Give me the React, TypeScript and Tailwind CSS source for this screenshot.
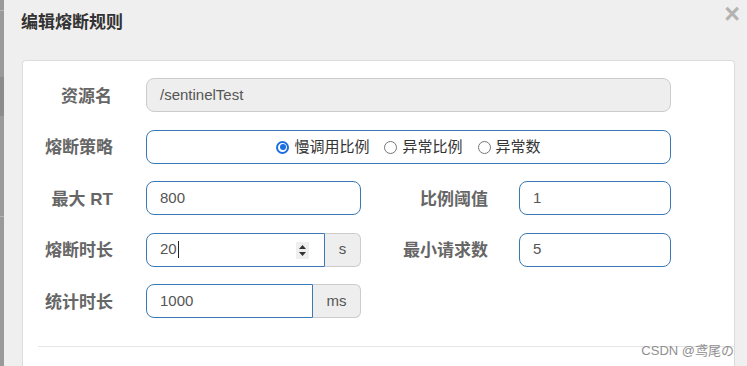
import type { ReactNode } from 'react'

const font = { fontFamily: '"Liberation Sans", "Noto Sans CJK SC", sans-serif' }

function Label({ children, w, pr }: { children: ReactNode; w: string; pr: string }) {
  return (
    <div className={`${w} ${pr} shrink-0 pt-[3px] text-right text-[17px] font-bold text-[#666]`}>
      {children}
    </div>
  )
}

function Radio({ checked, label }: { checked?: boolean; label: string }) {
  return (
    <div className="flex items-center gap-[5px]">
      {checked ? (
        <span className="flex h-[13px] w-[13px] items-center justify-center rounded-full border-2 border-[#1a6fe0] bg-white">
          <span className="h-[6px] w-[6px] rounded-full bg-[#1a6fe0]" />
        </span>
      ) : (
        <span className="h-[13px] w-[13px] rounded-full border border-[#767676] bg-white" />
      )}
      <span className="text-[15px] text-[#333]">{label}</span>
    </div>
  )
}

function Spinner() {
  return (
    <span className="absolute right-[15px] top-[8px] flex h-[17px] w-[13px] items-center justify-center bg-[#efefef]">
      <svg width="9" height="13" viewBox="0 0 9 13">
        <path d="M4.5 1 L8 5 L1 5 Z" fill="#333" />
        <path d="M4.5 12 L8 8 L1 8 Z" fill="#333" />
      </svg>
    </span>
  )
}

export default function App() {
  return (
    <div className="relative flex h-[366px] w-[747px] overflow-hidden bg-[#efefef]" style={font}>
      {/* page strip behind the modal */}
      <div className="flex w-[4px] shrink-0 flex-col bg-[#9a9a9a]">
        <div className="mt-[10px] h-px bg-[#b5b5b5]" />
        <div className="mt-[66px] h-[39px] bg-[#8c8c8c]" />
        <div className="mt-[100px] h-px bg-[#b5b5b5]" />
      </div>

      <div className="flex flex-1 flex-col">
        {/* header */}
        <div className="flex h-[60px] shrink-0 items-start pl-[17px] pt-[11px]">
          <h4 className="text-[17px] font-bold leading-[24px] text-[#333]">编辑熔断规则</h4>
        </div>
        <span className="absolute right-[7px] top-[1px] text-[27px] font-bold leading-[27px] text-[#b3b3b3]">×</span>

        {/* body card */}
        <div className="ml-[18px] flex w-[713px] flex-1 flex-col rounded-t-[4px] border border-b-0 border-[#dcdcdc] bg-white pt-[17px]">
          <div className="flex flex-col gap-[17.5px]">
            <div className="flex h-[34px] items-center">
              <Label w="w-[123px]" pr="pr-[34px]">资源名</Label>
              <div className="flex h-[34px] w-[525px] items-center rounded-[8px] border border-[#ccc] bg-[#eee] px-[13px] text-[15px] text-[#555]">
                /sentinelTest
              </div>
            </div>

            <div className="flex h-[34px] items-center">
              <Label w="w-[123px]" pr="pr-[33px]">熔断策略</Label>
              <div className="flex h-[34px] w-[525px] items-center justify-center gap-[15px] rounded-[8px] border border-[#3a78b8] bg-white pt-[1px]">
                <Radio checked label="慢调用比例" />
                <Radio label="异常比例" />
                <Radio label="异常数" />
              </div>
            </div>

            <div className="flex h-[34px] items-center">
              <Label w="w-[123px]" pr="pr-[33px]">最大 RT</Label>
              <div className="flex h-[34px] w-[215px] items-center rounded-[8px] border border-[#3a78b8] px-[13px] text-[15px] text-[#555]">
                800
              </div>
              <Label w="w-[158px]" pr="pr-[31px]">比例阈值</Label>
              <div className="flex h-[34px] w-[152px] items-center rounded-[8px] border border-[#3a78b8] px-[13px] text-[15px] text-[#555]">
                1
              </div>
            </div>

            <div className="flex h-[34px] items-center">
              <Label w="w-[123px]" pr="pr-[33px]">熔断时长</Label>
              <div className="flex w-[215px]">
                <div className="relative flex h-[34px] flex-1 items-center rounded-l-[8px] border border-[#3a78b8] px-[13px] text-[15px] text-[#555]">
                  20
                  <span className="ml-px h-[17px] w-px bg-[#222]" />
                  <Spinner />
                </div>
                <div className="flex h-[34px] w-[36px] items-center justify-center rounded-r-[6px] border border-l-0 border-[#ccc] bg-[#eee] text-[15px] text-[#555]">
                  s
                </div>
              </div>
              <Label w="w-[158px]" pr="pr-[31px]">最小请求数</Label>
              <div className="flex h-[34px] w-[152px] items-center rounded-[8px] border border-[#3a78b8] px-[13px] text-[15px] text-[#555]">
                5
              </div>
            </div>

            <div className="flex h-[34px] items-center">
              <Label w="w-[123px]" pr="pr-[33px]">统计时长</Label>
              <div className="flex w-[215px]">
                <div className="flex h-[34px] flex-1 items-center rounded-l-[8px] border border-[#3a78b8] px-[13px] text-[15px] text-[#555]">
                  1000
                </div>
                <div className="flex h-[34px] w-[48px] items-center justify-center rounded-r-[6px] border border-l-0 border-[#ccc] bg-[#eee] text-[15px] text-[#555]">
                  ms
                </div>
              </div>
            </div>
          </div>

          <div className="ml-[15px] mt-[28px] border-t border-[#e5e5e5]" />
        </div>
      </div>

      {/* watermark */}
      <span className="absolute bottom-[6px] right-[13px] text-[13px] leading-[18px] text-[#8f8f8f]">
        CSDN @鸢尾の
      </span>
    </div>
  )
}
